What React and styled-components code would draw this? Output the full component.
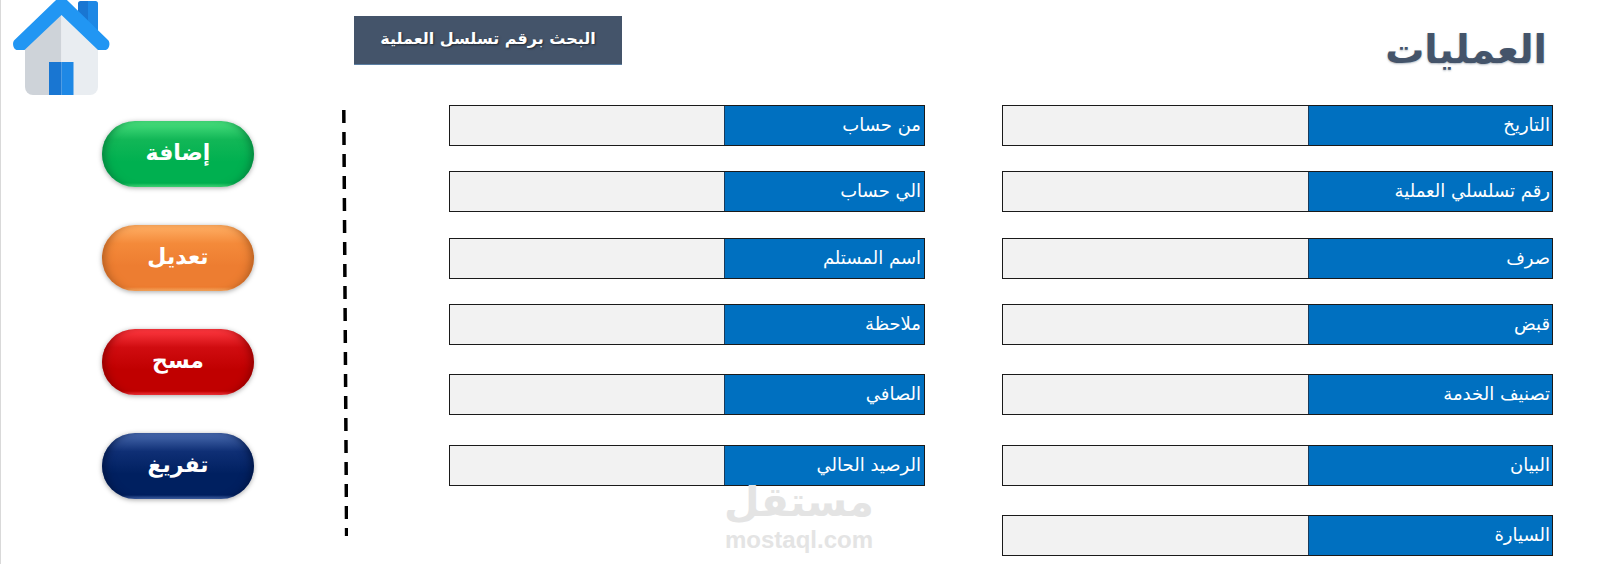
import styled, { createGlobalStyle } from 'styled-components';

const GlobalStyle = createGlobalStyle`
  html, body {
    margin: 0;
    padding: 0;
    background: #fff;
  }
`;

const tones = {
  green: { top: '#4be07f', mid: '#12b757', base: '#00b050', edge: '#067a3a' },
  orange: { top: '#ffb066', mid: '#f48a3a', base: '#ed7d31', edge: '#a9591f' },
  red: { top: '#ff3a42', mid: '#d00c10', base: '#c00000', edge: '#860000' },
  navy: { top: '#4a6cb0', mid: '#0f2f75', base: '#002060', edge: '#001440' },
};

const Page = styled.div`
  position: relative;
  display: flex;
  width: 1600px;
  height: 564px;
  overflow: hidden;
  box-sizing: border-box;
  border-left: 1px solid #d9d9d9;
  font-family: "DejaVu Sans", "Noto Sans", sans-serif;
`;

const Side = styled.aside`
  width: 341px;
  flex: none;
  display: flex;
  flex-direction: column;
`;

const HomeLink = styled.a`
  display: block;
  width: 100px;
  height: 98px;
  margin: -3px 0 26px 11px;
`;

const Actions = styled.div`
  display: flex;
  flex-direction: column;
  gap: 38px;
  margin-left: 101px;
`;

const ActionButton = styled.button`
  width: 152px;
  height: 66px;
  border: 0;
  padding: 0 0 3px;
  border-radius: 33px;
  color: #fff;
  font-family: inherit;
  font-size: 22px;
  font-weight: 700;
  background: linear-gradient(
    180deg,
    ${(p) => tones[p.$tone].top} 0%,
    ${(p) => tones[p.$tone].mid} 28%,
    ${(p) => tones[p.$tone].base} 62%,
    ${(p) => tones[p.$tone].base} 94%,
    ${(p) => tones[p.$tone].top} 100%
  );
  box-shadow:
    inset 8px 0 10px -6px ${(p) => tones[p.$tone].edge},
    inset -8px 0 10px -6px ${(p) => tones[p.$tone].edge},
    0 1px 5px rgba(0, 0, 0, 0.35);
`;

const Rule = styled.svg`
  flex: none;
  width: 6px;
  height: 426px;
  margin-top: 110px;
`;

const Main = styled.main`
  flex: 1;
  display: flex;
  flex-direction: column;
`;

const Header = styled.header`
  height: 105px;
  display: flex;
  justify-content: space-between;
  align-items: flex-start;
  padding: 16px 53px 0 6px;
  box-sizing: border-box;
`;

const SearchButton = styled.button`
  width: 268px;
  height: 49px;
  border: 1px solid #5b7fa3;
  border-width: 0 0 1px;
  padding: 0 0 3px;
  background: #44546a;
  color: #fff;
  font-family: inherit;
  font-size: 16px;
  font-weight: 700;
  text-shadow: 1px 1px 2px rgba(0, 0, 0, 0.5);
`;

const Title = styled.h1`
  margin: 6px 0 0;
  color: #44546a;
  font-size: 39px;
  font-weight: 700;
  line-height: 56px;
  text-shadow: 0 1px 2px rgba(68, 84, 106, 0.4);
`;

const Columns = styled.div`
  display: flex;
  align-items: flex-start;
  padding-left: 101px;
`;

const FieldColumn = styled.div`
  width: ${(p) => p.$width}px;
  margin-right: ${(p) => p.$gap || 0}px;
  display: flex;
  flex-direction: column;
`;

const Field = styled.div`
  display: flex;
  height: 41px;
  box-sizing: border-box;
  margin-bottom: ${(p) => p.$after}px;
  border: 1px solid #1a1a1a;
`;

const Input = styled.input`
  flex: 1;
  min-width: 0;
  border: 0;
  padding: 0;
  background: #f2f2f2;
`;

const Label = styled.label`
  width: ${(p) => p.$width}px;
  flex: none;
  box-sizing: border-box;
  padding: 0 ${(p) => p.$inset}px 0 0;
  background: #0070c0;
  border-left: 1px solid #1a3a5a;
  color: #fff;
  font-size: 18px;
  line-height: 38px;
  text-align: right;
  direction: rtl;
`;

const Watermark = styled.div`
  position: absolute;
  left: 723px;
  top: 476px;
  width: 150px;
  color: #e4e4e4;
  text-align: center;
  pointer-events: none;
`;

const WatermarkLogo = styled.div`
  font-size: 41px;
  font-weight: 700;
  line-height: 52px;
`;

const WatermarkText = styled.div`
  font-family: "Liberation Sans", sans-serif;
  font-size: 24px;
  font-weight: 700;
  line-height: 24px;
`;

const HouseIcon = () => (
  <svg viewBox="12 -3 100 98" width="100" height="98">
    <path d="M78 31V3.5a2.5 2.5 0 0 1 2.5-2.5H88v36z" fill="#1976d2" />
    <path d="M88 1h7.5a2.5 2.5 0 0 1 2.5 2.5V40L88 31z" fill="#1e88e5" />
    <path d="M61.5 10L25 44v43a8 8 0 0 0 8 8h28.5z" fill="#ced3d9" />
    <path d="M61.5 10L98 44v43a8 8 0 0 1-8 8H61.5z" fill="#e9edf1" />
    <rect x="49" y="62" width="12.5" height="33" fill="#1976d2" />
    <rect x="61.5" y="62" width="12" height="33" fill="#1e88e5" />
    <path
      d="M61.5 -3c-1.500 0-3 .6-4 1.600L14.500 40c-3 3-1 10 3 10h7L61.500 15l36.500 35h7c4 0 6-7 3-10L65.500 -1.400c-1-1-2.500-1.600-4-1.600z"
      fill="#2196f3"
    />
  </svg>
);

const rightFields = [
  ['التاريخ', 25],
  ['رقم تسلسلي العملية', 26],
  ['صرف', 25],
  ['قبض', 29],
  ['تصنيف الخدمة', 30],
  ['البيان', 29],
  ['السيارة', 0],
];

const leftFields = [
  ['من حساب', 25],
  ['الي حساب', 26],
  ['اسم المستلم', 25],
  ['ملاحظة', 29],
  ['الصافي', 30],
  ['الرصيد الحالي', 0],
];

const actions = [
  ['إضافة', 'green'],
  ['تعديل', 'orange'],
  ['مسح', 'red'],
  ['تفريغ', 'navy'],
];

const App = () => {
  return (
    <>
      <GlobalStyle />
      <Page>
        <Side>
          <HomeLink>
            <HouseIcon />
          </HomeLink>
          <Actions>
            {actions.map(([text, tone]) => (
              <ActionButton key={tone} $tone={tone}>{text}</ActionButton>
            ))}
          </Actions>
        </Side>

        <Rule viewBox="0 0 6 426">
          <line x1="1.8" y1="0" x2="4.6" y2="426" stroke="#000" strokeWidth="3.5" strokeDasharray="13 9" />
        </Rule>

        <Main>
          <Header>
            <SearchButton>البحث برقم تسلسل العملية</SearchButton>
            <Title>العمليات</Title>
          </Header>
          <Columns>
            <FieldColumn $width={476} $gap={77}>
              {leftFields.map(([text, after]) => (
                <Field key={text} $after={after}>
                  <Input />
                  <Label $width={200} $inset={3}>{text}</Label>
                </Field>
              ))}
            </FieldColumn>
            <FieldColumn $width={551}>
              {rightFields.map(([text, after]) => (
                <Field key={text} $after={after}>
                  <Input />
                  <Label $width={244} $inset={2}>{text}</Label>
                </Field>
              ))}
            </FieldColumn>
          </Columns>
        </Main>

        <Watermark>
          <WatermarkLogo>مستقل</WatermarkLogo>
          <WatermarkText>mostaql.com</WatermarkText>
        </Watermark>
      </Page>
    </>
  );
};

export default App;
